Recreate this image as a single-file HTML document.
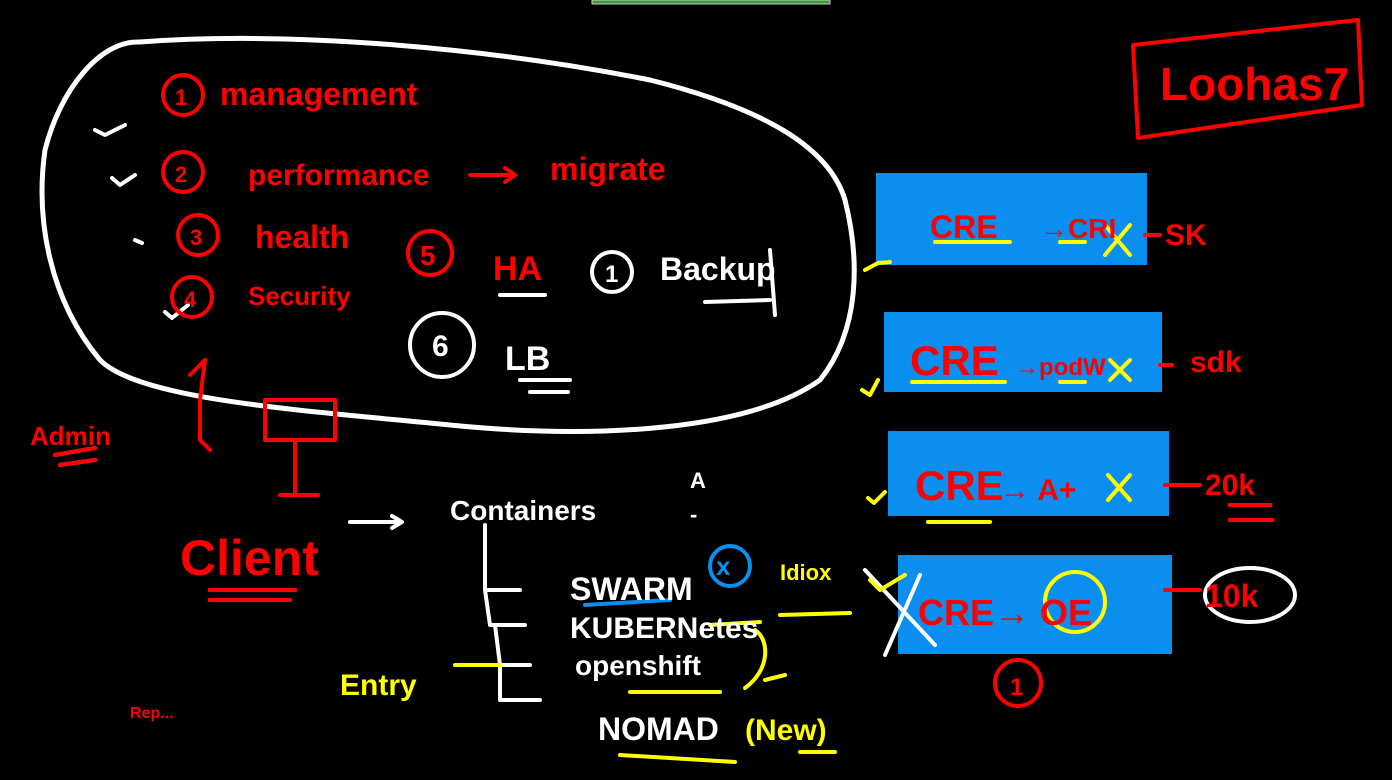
<!DOCTYPE html>
<html><head><meta charset="utf-8"><style>
html,body{margin:0;padding:0;background:#000;width:1392px;height:780px;overflow:hidden}
svg{display:block}
text{font-family:"Liberation Sans",sans-serif;font-weight:bold}
</style></head><body>
<svg width="1392" height="780" viewBox="0 0 1392 780" xmlns="http://www.w3.org/2000/svg">
<rect width="1392" height="780" fill="#000"/>
<rect x="592" y="0" width="238" height="4" fill="#3c9a3c" stroke="#ccc" stroke-width="1"/>
<!-- blue boxes -->
<rect x="876" y="173" width="271" height="92" fill="#0a8ef0"/>
<rect x="884" y="312" width="278" height="80" fill="#0a8ef0"/>
<rect x="888" y="431" width="281" height="85" fill="#0a8ef0"/>
<rect x="898" y="555" width="274" height="99" fill="#0a8ef0"/>
<g fill="none" stroke-linecap="round" stroke-linejoin="round">
<!-- white blob -->
<path d="M140 42 C100 40 60 90 45 150 C35 220 50 300 100 360 C140 400 300 410 450 425 C600 440 750 430 820 380 C860 330 860 260 845 200 C830 150 770 110 650 80 C500 50 300 30 140 42 Z" stroke="#fff" stroke-width="5"/>
<!-- red box top right -->
<path d="M1133 45 L1358 20 L1362 105 L1138 138 Z" stroke="#f00" stroke-width="4"/>
<!-- ticks -->
<path d="M95 130 L105 135 L125 125 M112 178 L120 185 L135 175 M135 240 L142 243 M165 312 L172 318 L188 305" stroke="#fff" stroke-width="4"/>
<!-- circles numbers -->
<circle cx="183" cy="95" r="20" stroke="#f00" stroke-width="4"/>
<circle cx="183" cy="172" r="20" stroke="#f00" stroke-width="4"/>
<circle cx="198" cy="235" r="20" stroke="#f00" stroke-width="4"/>
<circle cx="192" cy="297" r="20" stroke="#f00" stroke-width="4"/>
<circle cx="430" cy="253" r="22" stroke="#f00" stroke-width="4"/>
<circle cx="1018" cy="683" r="23" stroke="#f00" stroke-width="4"/>
<circle cx="612" cy="272" r="20" stroke="#fff" stroke-width="4"/>
<circle cx="442" cy="345" r="32" stroke="#fff" stroke-width="4"/>
<ellipse cx="1250" cy="595" rx="45" ry="27" stroke="#fff" stroke-width="4"/>
<ellipse cx="1075" cy="602" rx="30" ry="30" stroke="#ff0" stroke-width="4"/>
<circle cx="730" cy="566" r="20" stroke="#0a8ef0" stroke-width="4"/>
<!-- arrows -->
<path d="M470 175 L515 175 M505 168 L515 175 L505 182" stroke="#f00" stroke-width="4"/>
<path d="M350 522 L400 522 M392 516 L402 522 L392 528" stroke="#fff" stroke-width="4"/>
<!-- tree -->
<path d="M485 525 L485 590 L520 590 M485 590 L490 625 L525 625 M495 625 L500 665 L530 665 M500 665 L500 700 L540 700" stroke="#fff" stroke-width="4"/>
<!-- admin stickman -->
<path d="M190 375 L205 360 M205 360 L200 400 L200 440 L210 450 M265 400 L335 400 L335 440 L265 440 Z M295 440 L295 495 M280 495 L318 495" stroke="#f00" stroke-width="4"/>
<!-- underlines -->
<path d="M935 242 L1010 242 M1060 242 L1085 242 M912 382 L1005 382 M1060 382 L1085 382 M928 522 L990 522 M1230 505 L1270 505 M1230 520 L1272 520 M210 590 L295 590 M210 600 L290 600 M55 455 L95 448 M60 465 L95 460" stroke="#ff0" stroke-width="4"/>
<path d="M1230 505 L1270 505 M1230 520 L1272 520 M210 590 L295 590 M210 600 L290 600 M55 455 L95 448 M60 465 L95 460" stroke="#f00" stroke-width="4"/>
<path d="M585 605 L670 600" stroke="#0a8ef0" stroke-width="4"/>
<path d="M710 625 L760 622 M780 615 L850 613 M630 692 L720 692 M620 755 L735 762 M800 752 L835 752 M455 665 L500 665" stroke="#ff0" stroke-width="4"/>
<path d="M755 630 C770 640 770 670 745 688 M765 680 L785 675" stroke="#ff0" stroke-width="4"/>
<path d="M500 295 L545 295 M520 380 L570 380 M530 392 L568 392 M705 302 L770 300 M770 250 L775 315" stroke="#fff" stroke-width="4"/>
<!-- X marks -->
<path d="M865 570 L935 645 M920 575 L885 655" stroke="#fff" stroke-width="4"/>
<path d="M1105 225 L1130 255 M1130 225 L1105 255 M1110 360 L1130 380 M1130 360 L1110 380 M1108 475 L1130 500 M1130 475 L1108 500" stroke="#ff0" stroke-width="4"/>
<path d="M865 270 L878 263 L890 262 M862 390 L870 395 L878 380 M868 498 L874 503 L885 492 M870 580 L880 590 L905 575" stroke="#ff0" stroke-width="4"/>
<path d="M1145 235 L1160 235 M1160 365 L1172 365 M1165 485 L1200 485 M1165 590 L1200 590" stroke="#f00" stroke-width="4"/>
</g>
<g font-size="30" fill="#f00">
<text x="220" y="105" font-size="32">management</text>
<text x="248" y="185">performance</text>
<text x="550" y="180" font-size="32">migrate</text>
<text x="255" y="248" font-size="32">health</text>
<text x="248" y="305" font-size="26">Security</text>
<text x="420" y="265" font-size="28">5</text>
<text x="493" y="280" font-size="34">HA</text>
<text x="175" y="105" font-size="22">1</text>
<text x="175" y="182" font-size="22">2</text>
<text x="190" y="245" font-size="22">3</text>
<text x="184" y="307" font-size="22">4</text>
<text x="1160" y="100" font-size="46">Loohas7</text>
<text x="30" y="445" font-size="26">Admin</text>
<text x="180" y="575" font-size="50">Client</text>
<text x="930" y="238" font-size="32">CRE</text>
<text x="1040" y="238" font-size="28">→CRI</text>
<text x="1165" y="245" font-size="30">SK</text>
<text x="910" y="375" font-size="42">CRE</text>
<text x="1015" y="375" font-size="24">→podW</text>
<text x="1190" y="372" font-size="30">sdk</text>
<text x="915" y="500" font-size="42">CRE</text>
<text x="1000" y="500" font-size="30">→ A+</text>
<text x="1205" y="495" font-size="30">20k</text>
<text x="918" y="625" font-size="36">CRE→ OE</text>
<text x="1205" y="607" font-size="32">10k</text>
<text x="1010" y="695" font-size="24">1</text>
<text x="130" y="718" font-size="16">Rep...</text>
</g>
<g fill="#fff">
<text x="605" y="282" font-size="24">1</text>
<text x="660" y="280" font-size="32">Backup</text>
<text x="432" y="356" font-size="30">6</text>
<text x="505" y="370" font-size="34">LB</text>
<text x="450" y="520" font-size="28">Containers</text>
<text x="690" y="488" font-size="22">A</text>
<text x="690" y="522" font-size="22">-</text>
<text x="570" y="600" font-size="32">SWARM</text>
<text x="570" y="638" font-size="30">KUBERNetes</text>
<text x="575" y="675" font-size="28">openshift</text>
<text x="598" y="740" font-size="32">NOMAD</text>
</g>
<g fill="#ff0">
<text x="340" y="695" font-size="30">Entry</text>
<text x="745" y="740" font-size="30">(New)</text>
<text x="780" y="580" font-size="22">Idiox</text>
</g>
<text x="716" y="575" font-size="26" fill="#0a8ef0">x</text>
</svg>
</body></html>
